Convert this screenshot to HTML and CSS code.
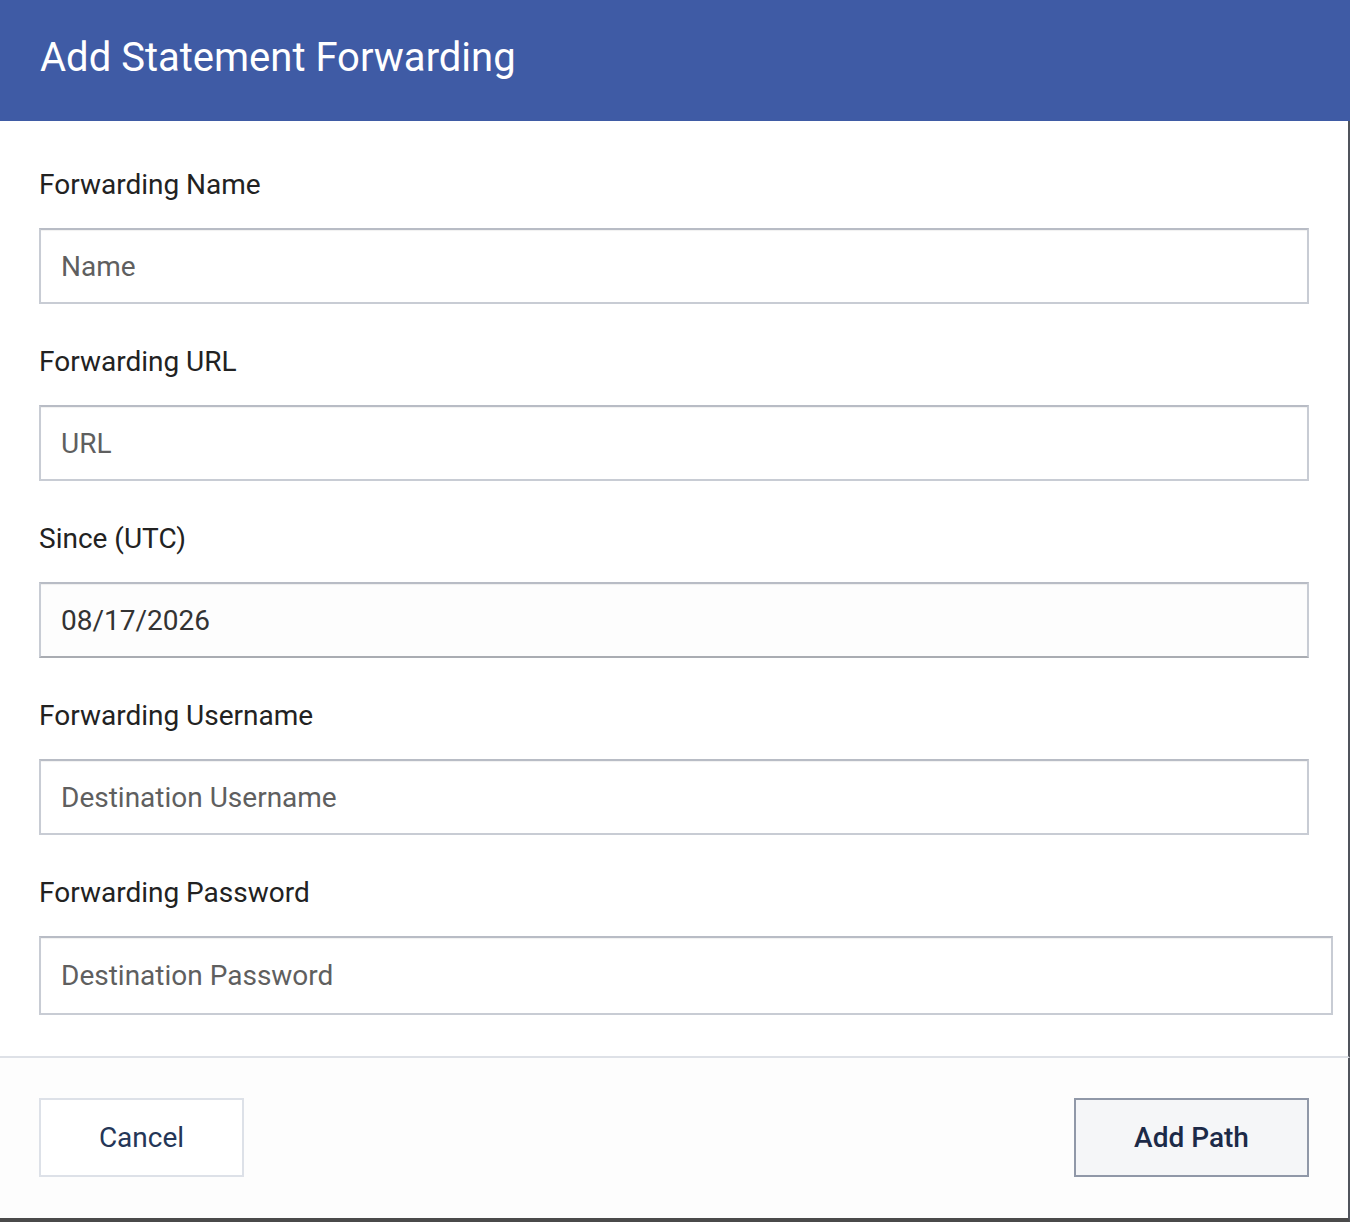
FILE: index.html
```html
<!DOCTYPE html>
<html lang="en">
<head>
  <meta charset="UTF-8" />
  <meta name="viewport" content="width=device-width, initial-scale=1.0"/>
  <title>Add Statement Forwarding</title>
  <link rel="stylesheet" href="styles.css">
</head>
<body>

  <div class="modal">
    <div class="modal-header">
      <h1>Add Statement Forwarding</h1>
    </div>

    <form class="modal-body">
      <div class="field">
        <label for="nome">Forwarding Name</label>
        <input type="text" id="nome" placeholder="Name">
      </div>

      <div class="field">
        <label for="url">Forwarding URL</label>
        <input type="text" id="url" placeholder="URL">
      </div>

      <div class="field">
        <label for="since">Since (UTC)</label>
        <input type="text" id="since" class="date" value="08/17/2026">
      </div>

      <div class="field">
        <label for="usuario">Forwarding Username</label>
        <input type="text" id="usuario" placeholder="Destination Username">
      </div>

      <div class="field">
        <label for="senha">Forwarding Password</label>
        <input type="password" id="senha" class="wide" placeholder="Destination Password">
      </div>
    </form>

    <div class="modal-footer">
      <button type="button" class="btn">Cancel</button>
      <button type="button" class="btn primary">Add Path</button>
    </div>
  </div>

</body>
</html>
```

FILE: styles.css
```css
body {
  margin: 0;
  font-family: Roboto, "Liberation Sans", Arial, sans-serif;
  background: #fff;
}
.modal {
  width: 1350px;
}
.modal-header {
  background-color: #3f5ba5;
  height: 121px;
  padding: 0 40px;
  display: flex;
  align-items: center;
  box-sizing: border-box;
}
.modal-header h1 {
  margin: 0;
  color: #fff;
  font-size: 40px;
  font-weight: 400;
  line-height: 1;
  padding-bottom: 6px;
}
.modal-body {
  padding: 47px 39px 0;
  border-right: 2px solid #50545c;
  border-bottom: 2px solid #dee1e7;
  display: flow-root;
}
.field {
  display: flex;
  flex-direction: column;
  margin-bottom: 41px;
}
.field label {
  font-size: 28px;
  line-height: 33px;
  color: #222;
  margin-bottom: 27px;
}
.field input {
  width: 1270px;
  height: 76px;
  box-sizing: border-box;
  border: 2px solid #c8ccd4;
  border-top-color: #b8bcc5;
  box-shadow: inset 0 1px 1px rgba(0, 0, 0, 0.06);
  padding: 0 20px;
  font-family: inherit;
  font-size: 28px;
  color: #333;
  background: #fff;
  outline: none;
}
.field input::placeholder {
  color: #5f5f5f;
}
.field input.date {
  border-bottom-color: #a9acb2;
  background: #fdfdfd;
}
.field input.wide {
  width: 1294px;
  height: 79px;
}
.modal-footer {
  display: flex;
  justify-content: space-between;
  padding: 40px 39px 41px 39px;
  border-right: 2px solid #50545c;
  border-bottom: 4px solid #4a4a4a;
  background: #fdfdfd;
}
.btn {
  height: 79px;
  width: 205px;
  border: 2px solid #dde1e8;
  background: #fff;
  color: #243657;
  font-family: inherit;
  font-size: 28px;
  cursor: pointer;
}
.btn.primary {
  width: 235px;
  border-color: #9098a8;
  background: #f5f6f8;
  color: #1c2a48;
  font-weight: 500;
}
```
